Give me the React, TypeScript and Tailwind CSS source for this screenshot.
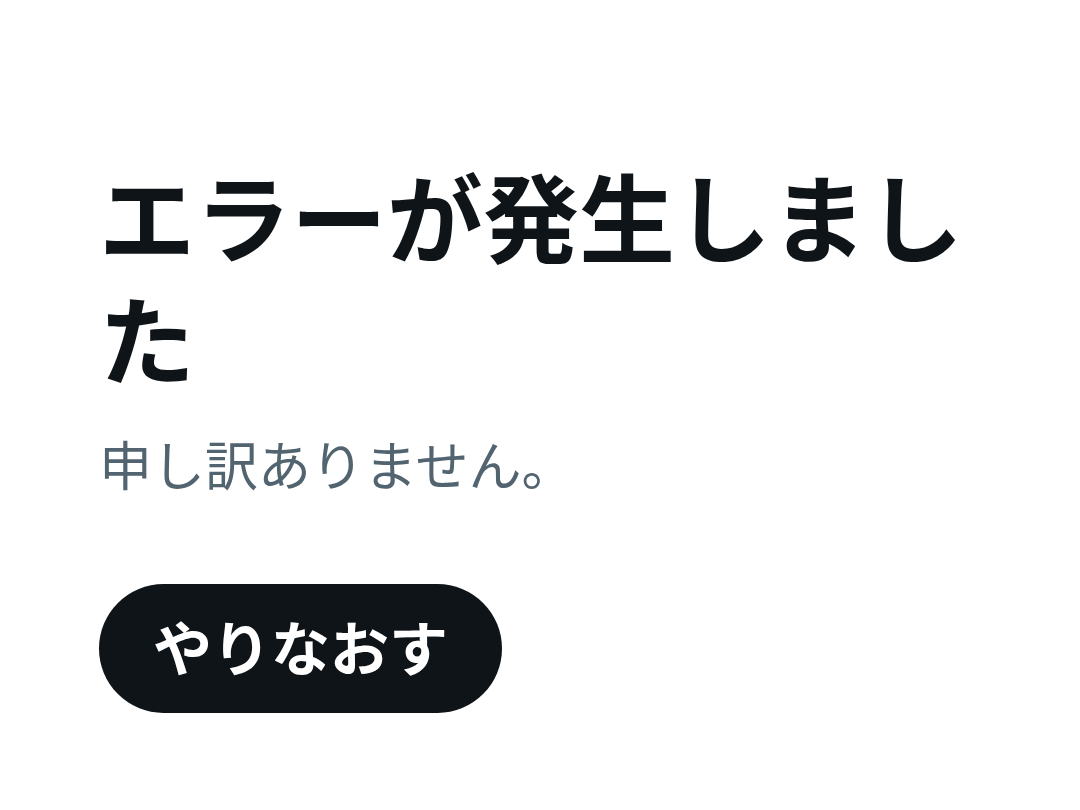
import React from 'react';

const App: React.FC = () => {
  return (
    <div
      className="min-h-screen bg-white px-[99px] pt-[157px]"
      style={{ fontFamily: '"Noto Sans", "Noto Sans CJK JP", sans-serif' }}
    >
      <h1 className="text-[96px] leading-[122px] font-bold text-[#0f1419]">
        エラーが発生しました
      </h1>
      <p className="mt-[35px] text-[53px] leading-[60px] text-[#536471]">
        申し訳ありません。
      </p>
      <button className="mt-[88px] h-[129px] px-[54px] rounded-full bg-[#0f1419] text-white text-[59px] font-bold">
        やりなおす
      </button>
    </div>
  );
};

export default App;
